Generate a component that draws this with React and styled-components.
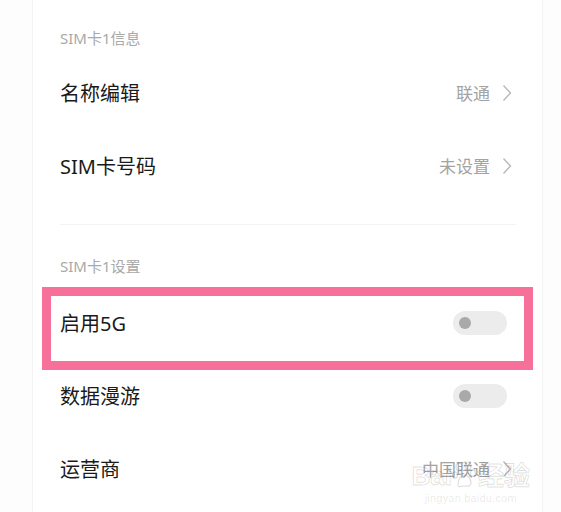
import React from "react";
import styled, { createGlobalStyle } from "styled-components";

const GlobalStyle = createGlobalStyle`
  html, body {
    margin: 0;
    padding: 0;
    background: #fdfdfd;
    font-family: "Noto Sans", "Noto Sans CJK SC", sans-serif;
  }
`;

const Page = styled.div`
  width: 561px;
  height: 512px;
  overflow: hidden;
  display: flex;
  justify-content: flex-start;
`;

const Card = styled.div`
  position: relative;
  margin-left: 32px;
  width: 511px;
  min-height: 512px;
  background: #ffffff;
  border-left: 1px solid #f3f3f3;
  border-right: 1px solid #f3f3f3;
  box-sizing: border-box;
`;

const SectionTitle = styled.div`
  padding: ${(p) => (p.first ? "28px 0 8px" : "31px 0 10px")} 27px;
  font-size: 15px;
  line-height: 20px;
  color: #a9a9a9;
`;

const Row = styled.div`
  position: relative;
  height: 73px;
  display: flex;
  align-items: center;
  justify-content: space-between;
  padding: 0 30px 0 27px;
`;

const Title = styled.span`
  font-size: 20px;
  color: #1a1a1a;
`;

const Value = styled.span`
  display: flex;
  align-items: center;
  gap: 12px;
  font-size: 17px;
  color: #a3a3a3;
`;

const Divider = styled.div`
  height: 1px;
  margin: 22px 26px 0 27px;
  background: #f3f3f3;
`;

const Track = styled.div`
  width: 54px;
  height: 24px;
  margin-right: 5px;
  border-radius: 12px;
  background: #ececec;
  display: flex;
  align-items: center;
  padding-left: 6px;
  box-sizing: border-box;
`;

const Knob = styled.div`
  width: 12px;
  height: 12px;
  border-radius: 50%;
  background: #a9a9a9;
`;

const Highlight = styled.div`
  position: absolute;
  left: 9px;
  top: 1px;
  width: 491px;
  height: 83px;
  border: 9px solid #f7709a;
  box-sizing: border-box;
  pointer-events: none;
`;

const Watermark = styled.div`
  position: absolute;
  right: 12px;
  bottom: 8px;
  display: flex;
  flex-direction: column;
  align-items: center;
  color: rgba(0, 0, 0, 0.1);
  font-family: "Liberation Sans", "Noto Sans CJK SC", sans-serif;
  pointer-events: none;
`;

const MarkTop = styled.div`
  display: flex;
  align-items: flex-end;
  font-size: 26px;
  font-weight: bold;
  line-height: 26px;
  color: transparent;
  -webkit-text-stroke: 1px rgba(0, 0, 0, 0.13);
`;

const MarkUrl = styled.div`
  font-size: 11px;
  margin-top: 3px;
  letter-spacing: 0.2px;
`;

const Chevron = () => (
  <svg width="10" height="18" viewBox="0 0 10 18">
    <polyline points="1.5,1.5 8.5,9 1.5,16.5" fill="none" stroke="#b8b8b8" strokeWidth="1.4" />
  </svg>
);

const Toggle = () => (
  <Track>
    <Knob />
  </Track>
);

const Paw = () => (
  <svg width="26" height="28" viewBox="0 0 26 28">
    <g fill="none" stroke="rgba(0,0,0,0.13)" strokeWidth="1.2">
      <ellipse cx="7" cy="6" rx="3" ry="4" />
      <ellipse cx="16" cy="5" rx="3" ry="4" />
      <ellipse cx="3" cy="14" rx="2.5" ry="3.2" />
      <ellipse cx="21" cy="12" rx="2.5" ry="3.2" />
      <path d="M6 24 C6 17 9 14 12 14 C16 14 19 18 19 22 C19 26 15 25 12 25 C9 25 6 27 6 24 Z" />
    </g>
  </svg>
);

const App = () => (
  <Page>
    <GlobalStyle />
    <Card>
      <SectionTitle first>SIM卡1信息</SectionTitle>
      <Row>
        <Title>名称编辑</Title>
        <Value>
          联通
          <Chevron />
        </Value>
      </Row>
      <Row>
        <Title>SIM卡号码</Title>
        <Value>
          未设置
          <Chevron />
        </Value>
      </Row>
      <Divider />
      <SectionTitle>SIM卡1设置</SectionTitle>
      <Row>
        <Title>启用5G</Title>
        <Toggle />
        <Highlight />
      </Row>
      <Row>
        <Title>数据漫游</Title>
        <Toggle />
      </Row>
      <Row>
        <Title>运营商</Title>
        <Value>
          中国联通
          <Chevron />
        </Value>
      </Row>
      <Watermark>
        <MarkTop>
          Bai
          <Paw />
          经验
        </MarkTop>
        <MarkUrl>jingyan.baidu.com</MarkUrl>
      </Watermark>
    </Card>
  </Page>
);

export default App;
